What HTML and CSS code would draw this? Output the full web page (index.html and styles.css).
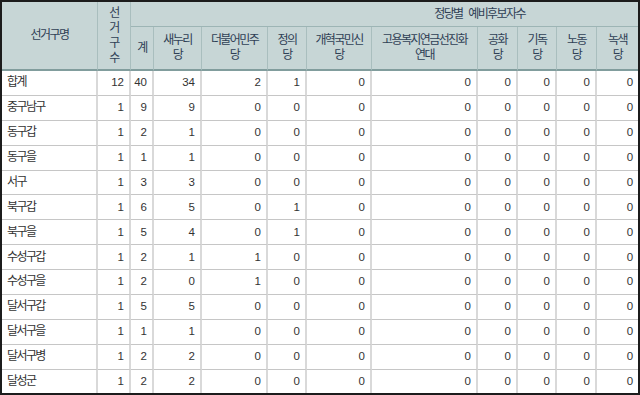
FILE: index.html
```html
<!DOCTYPE html>
<html lang="ko">
<head>
<meta charset="utf-8">
<link rel="stylesheet" href="styles.css">
</head>
<body>
<div class="frame">
<table class="tbl">
  <colgroup>
    <col style="width:96px"><col style="width:33px"><col style="width:23px"><col style="width:48px"><col style="width:66px"><col style="width:39px"><col style="width:65px"><col style="width:106px"><col style="width:40px"><col style="width:39px"><col style="width:40px"><col style="width:41px">
  </colgroup>
  <thead>
    <tr class="h1">
      <th rowspan="2" class="hname">선거구명</th>
      <th rowspan="2" class="hvert">선<br>거<br>구<br>수</th>
      <th colspan="10" class="hgroup">정당별 예비후보자수</th>
    </tr>
    <tr class="h2">
      <th>계</th>
      <th>새누리<br>당</th>
      <th>더불어민주<br>당</th>
      <th>정의<br>당</th>
      <th>개혁국민신<br>당</th>
      <th>고용복지연금선진화<br>연대</th>
      <th>공화<br>당</th>
      <th>기독<br>당</th>
      <th>노동<br>당</th>
      <th class="last">녹색<br>당</th>
    </tr>
  </thead>
  <tbody>
    <tr><td class="name">합계</td><td>12</td><td>40</td><td>34</td><td>2</td><td>1</td><td>0</td><td>0</td><td>0</td><td>0</td><td>0</td><td class="last">0</td></tr>
    <tr><td class="name">중구남구</td><td>1</td><td>9</td><td>9</td><td>0</td><td>0</td><td>0</td><td>0</td><td>0</td><td>0</td><td>0</td><td class="last">0</td></tr>
    <tr><td class="name">동구갑</td><td>1</td><td>2</td><td>1</td><td>0</td><td>0</td><td>0</td><td>0</td><td>0</td><td>0</td><td>0</td><td class="last">0</td></tr>
    <tr><td class="name">동구을</td><td>1</td><td>1</td><td>1</td><td>0</td><td>0</td><td>0</td><td>0</td><td>0</td><td>0</td><td>0</td><td class="last">0</td></tr>
    <tr><td class="name">서구</td><td>1</td><td>3</td><td>3</td><td>0</td><td>0</td><td>0</td><td>0</td><td>0</td><td>0</td><td>0</td><td class="last">0</td></tr>
    <tr><td class="name">북구갑</td><td>1</td><td>6</td><td>5</td><td>0</td><td>1</td><td>0</td><td>0</td><td>0</td><td>0</td><td>0</td><td class="last">0</td></tr>
    <tr><td class="name">북구을</td><td>1</td><td>5</td><td>4</td><td>0</td><td>1</td><td>0</td><td>0</td><td>0</td><td>0</td><td>0</td><td class="last">0</td></tr>
    <tr><td class="name">수성구갑</td><td>1</td><td>2</td><td>1</td><td>1</td><td>0</td><td>0</td><td>0</td><td>0</td><td>0</td><td>0</td><td class="last">0</td></tr>
    <tr><td class="name">수성구을</td><td>1</td><td>2</td><td>0</td><td>1</td><td>0</td><td>0</td><td>0</td><td>0</td><td>0</td><td>0</td><td class="last">0</td></tr>
    <tr><td class="name">달서구갑</td><td>1</td><td>5</td><td>5</td><td>0</td><td>0</td><td>0</td><td>0</td><td>0</td><td>0</td><td>0</td><td class="last">0</td></tr>
    <tr><td class="name">달서구을</td><td>1</td><td>1</td><td>1</td><td>0</td><td>0</td><td>0</td><td>0</td><td>0</td><td>0</td><td>0</td><td class="last">0</td></tr>
    <tr><td class="name">달서구병</td><td>1</td><td>2</td><td>2</td><td>0</td><td>0</td><td>0</td><td>0</td><td>0</td><td>0</td><td>0</td><td class="last">0</td></tr>
    <tr class="lastrow"><td class="name">달성군</td><td>1</td><td>2</td><td>2</td><td>0</td><td>0</td><td>0</td><td>0</td><td>0</td><td>0</td><td>0</td><td class="last">0</td></tr>
  </tbody>
</table>
</div>
</body>
</html>
```
FILE: styles.css
```css
html, body {
  margin: 0;
  padding: 0;
  background: #ffffff;
}
.frame {
  width: 640px;
  height: 395px;
  box-sizing: border-box;
  border: 2px solid #1c1c1c;
  overflow: hidden;
}
.tbl {
  width: 636px;
  height: 391px;
  table-layout: fixed;
  border-collapse: separate;
  border-spacing: 0;
  font-family: "Liberation Sans", "Noto Sans CJK KR", sans-serif;
  font-size: 12px;
  letter-spacing: -1.6px;
  word-spacing: 4px;
  color: #333333;
}
.tbl th {
  background: #c7d6d6;
  color: #2f4055;
  font-weight: normal;
  text-align: center;
  vertical-align: middle;
  line-height: 15px;
  padding: 0;
  border-right: 1px solid #a9bebe;
  border-bottom: 1px solid #9db5b5;
  box-sizing: border-box;
}
.tbl .h1 {
  height: 25px;
}
.tbl .h2 {
  height: 44px;
}
.tbl .h2 th {
  border-bottom: 2px solid #819d9d;
}
.tbl th.hname,
.tbl th.hvert {
  border-bottom: 2px solid #819d9d;
}
.tbl th.hgroup {
  border-right: none;
  padding-left: 190px;
}
.tbl th.last {
  border-right: none;
}
.tbl td {
  text-align: right;
  vertical-align: middle;
  padding: 0 5px 0 0;
  border-right: 2px solid #d9d9d9;
  border-bottom: 1px solid #c6c6c6;
  line-height: 15px;
  font-size: 11.5px;
  letter-spacing: 0;
  box-sizing: border-box;
}
.tbl td.name {
  text-align: left;
  padding: 0 0 0 5px;
  font-size: 12px;
  letter-spacing: -1.6px;
}
.tbl td.last {
  border-right: none;
}
.tbl tr.lastrow td {
  border-bottom: none;
}
```
